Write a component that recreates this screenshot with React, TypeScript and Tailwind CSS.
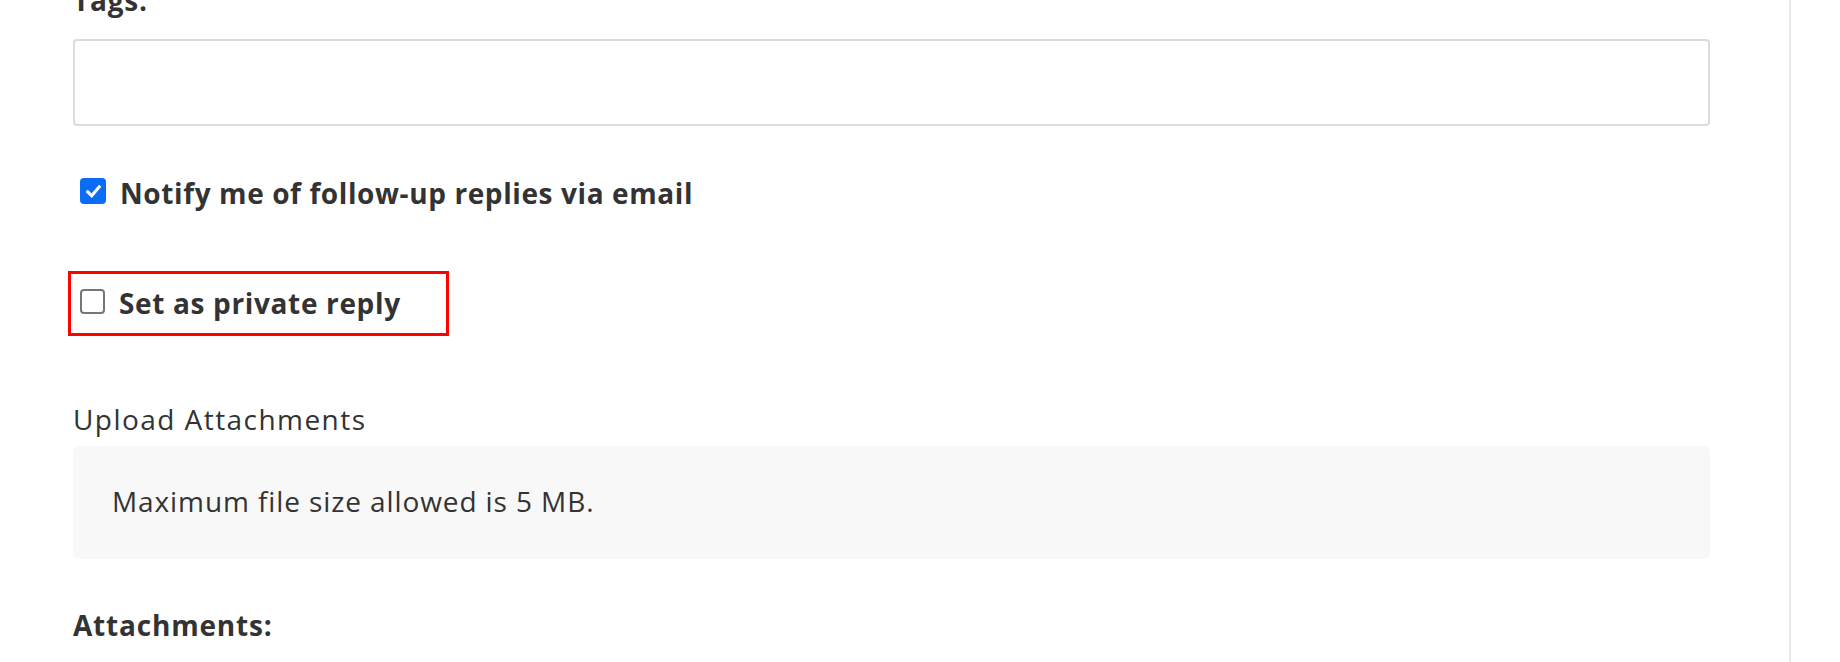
import React from "react";

export default function App() {
  const font = { fontFamily: '"Open Sans", "Liberation Sans", sans-serif' };
  return (
    <div className="w-[1840px] h-[662px] overflow-hidden bg-white flex" style={font}>
      <div className="w-[1791px] border-r-2 border-[#e8e8e8] pl-[73px] pr-[81px] text-[#333333]">
        <div className="h-[20px] -mt-[15px] text-[28px] font-bold leading-[30px] tracking-[0.8px]">Tags:</div>
        <div className="mt-[34px] h-[87px] w-[1637px] rounded-[4px] border-2 border-[#dcdcdc] bg-white" />
        <label className="mt-[52px] flex items-center gap-[14px] pl-[7px] h-[30px]">
          <span className="-mt-[4px] flex h-[26px] w-[26px] items-center justify-center rounded-[4px] bg-[#0b6cf5]">
            <svg viewBox="0 0 16 16" className="h-[19px] w-[19px]" fill="none" stroke="white" strokeWidth="2.6" strokeLinecap="square">
              <path d="M3.2 8.4 L6.5 11.6 L12.8 4.2" />
            </svg>
          </span>
          <span className="text-[28px] font-bold leading-[30px] tracking-[0.6px]">Notify me of follow-up replies via email</span>
        </label>
        <div className="mt-[63px] -ml-[5px] flex h-[65px] w-[381px] items-center border-[3px] border-[#ff0000] pl-[9px]">
          <label className="flex items-center gap-[14px] pb-[1px]">
            <span className="-mt-[4px] h-[25px] w-[25px] rounded-[4px] border-2 border-[#767676] bg-white" />
            <span className="text-[28px] font-bold leading-[30px] tracking-[0.65px]">Set as private reply</span>
          </label>
        </div>
        <div className="mt-[68px] text-[28px] leading-[30px] tracking-[1.45px]">Upload Attachments</div>
        <div className="mt-[12px] flex h-[113px] w-[1637px] items-center rounded-[6px] bg-[#f8f8f8] pl-[39px] pb-[4px]">
          <span className="text-[28px] leading-[30px] tracking-[0.9px]">Maximum file size allowed is 5 MB.</span>
        </div>
        <div className="mt-[51px] text-[28px] font-bold leading-[30px] tracking-[0.8px]">Attachments:</div>
      </div>
    </div>
  );
}
